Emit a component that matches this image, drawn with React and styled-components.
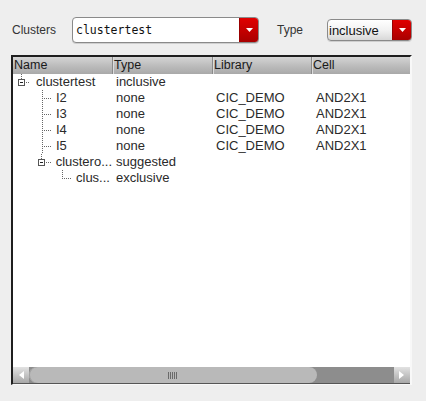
import React from "react";
import styled, { createGlobalStyle } from "styled-components";

const Global = createGlobalStyle`
  html, body { margin: 0; padding: 0; background: #eeeeee; }
  body { font-family: "Liberation Sans", Arial, sans-serif; color: #222; }
`;

const Page = styled.div`
  width: 426px;
  height: 401px;
  box-sizing: border-box;
  padding-top: 17px;
`;

const TopBar = styled.div`
  display: flex;
  align-items: center;
  height: 26px;
  padding-left: 12px;
`;

const Label = styled.span`
  font-size: 12px;
  color: #333;
  width: ${(p) => p.$w}px;
`;

const Combo = styled.div`
  display: flex;
  width: ${(p) => p.$w}px;
  height: ${(p) => p.$h}px;
  box-sizing: border-box;
  border: 1px solid #8a8a8a;
  border-radius: 4px;
  overflow: hidden;
  background: ${(p) => (p.$flat ? "#fff" : "linear-gradient(#ffffff, #f2f2f2 50%, #d8d8d8)")};
  box-shadow: 0 1px 0 #cfcfcf;
`;

const ComboText = styled.span`
  flex: 1;
  display: flex;
  align-items: center;
  padding-left: ${(p) => (p.$mono ? 3 : 1)}px;
  font-family: ${(p) => (p.$mono ? '"DejaVu Sans Mono", "Liberation Mono", monospace' : '"Liberation Sans", Arial, sans-serif')};
  font-size: ${(p) => (p.$mono ? 11.5 : 13)}px;
  color: #111;
`;

const RedButton = styled.span`
  width: 18px;
  display: flex;
  align-items: center;
  justify-content: center;
  background: linear-gradient(#e00000, #c00000 60%, #a80000);
  border-left: 1px solid #900;
`;

const Arrow = () => (
  <svg width="7" height="4" viewBox="0 0 7 4">
    <polygon points="0,0 7,0 3.5,4" fill="#fff" />
  </svg>
);

const Table = styled.div`
  margin: 12px 0 0 11px;
  width: 401px;
  height: 330px;
  box-sizing: border-box;
  border-top: 2px solid #1e1e1e;
  border-left: 2px solid #1e1e1e;
  border-right: 2px solid #f8f8f8;
  border-bottom: 1px solid #f8f8f8;
  background: #fff;
  display: flex;
  flex-direction: column;
`;

const Cols = "99px 100px 99px 97px";

const Header = styled.div`
  display: grid;
  grid-template-columns: ${Cols};
  height: 17px;
  background: linear-gradient(#d4d4d4, #bdbdbd 50%, #a9a9a9);
`;

const HeadCell = styled.div`
  font-size: 12.5px;
  line-height: 17px;
  padding-left: 1px;
  color: #1a1a1a;
  border-left: ${(p) => (p.$first ? "none" : "1px solid #8a8a8a")};
  box-shadow: ${(p) => (p.$first ? "none" : "inset 1px 0 0 #dcdcdc")};
  white-space: nowrap;
`;

const Body = styled.div`
  flex: 1;
`;

const Row = styled.div`
  display: grid;
  grid-template-columns: ${Cols};
  height: 16px;
  font-size: 13px;
  line-height: 16px;
  color: #2a2a2a;
`;

const NameCell = styled.div`
  display: flex;
  align-items: center;
  white-space: nowrap;
`;

const Cell = styled.div`
  padding-left: ${(p) => p.$pad}px;
  white-space: nowrap;
`;

const dot = { stroke: "#666", strokeWidth: 1, strokeDasharray: "1 1", shapeRendering: "crispEdges" };

const Expander = ({ x, y }) => (
  <g shapeRendering="crispEdges">
    <rect x={x + 0.5} y={y + 0.5} width="6" height="6" fill="#fff" stroke="#555" />
    <line x1={x + 2} y1={y + 3.5} x2={x + 5} y2={y + 3.5} stroke="#222" />
  </g>
);

const TreeLines = ({ kind }) => {
  if (kind === "root")
    return (
      <svg width="23" height="16">
        <line x1="8.5" y1="0" x2="8.5" y2="5" {...dot} />
        <Expander x={5} y={5} />
        <line x1="13" y1="8.5" x2="17" y2="8.5" {...dot} />
      </svg>
    );
  if (kind === "leaf1")
    return (
      <svg width="43" height="16">
        <line x1="29.5" y1="0" x2="29.5" y2="16" {...dot} />
        <line x1="31" y1="8.5" x2="39" y2="8.5" {...dot} />
      </svg>
    );
  if (kind === "node1")
    return (
      <svg width="43" height="16">
        <line x1="28.5" y1="0" x2="28.5" y2="5" {...dot} />
        <Expander x={25} y={5} />
        <line x1="33" y1="8.5" x2="38" y2="8.5" {...dot} />
      </svg>
    );
  return (
    <svg width="63" height="16">
      <line x1="49.5" y1="0" x2="49.5" y2="9" {...dot} />
      <line x1="51" y1="8.5" x2="59" y2="8.5" {...dot} />
    </svg>
  );
};

const Scrollbar = styled.div`
  display: flex;
  height: 16px;
  background: #8d8d8d;
  border-bottom: 1px solid #555;
`;

const ScrollButton = styled.div`
  width: 16px;
  display: flex;
  align-items: center;
  justify-content: center;
  background: linear-gradient(#e2e2e2, #c4c4c4 50%, #a8a8a8);
`;

const Thumb = styled.div`
  width: ${(p) => p.$w}px;
  display: flex;
  align-items: center;
  justify-content: flex-end;
  padding-right: 140px;
  box-sizing: border-box;
  background: #b9b9b9;
  border-radius: 8px;
  box-shadow: inset 1px 0 0 #a0a0a0;
`;

const Track = styled.div`
  flex: 1;
`;

const Grip = () => (
  <svg width="9" height="7" shapeRendering="crispEdges">
    {[0, 2, 4, 6, 8].map((x) => (
      <line key={x} x1={x + 0.5} y1="0" x2={x + 0.5} y2="7" stroke="#6a6a6a" />
    ))}
  </svg>
);

const rows = [
  { kind: "root", name: "clustertest", type: "inclusive" },
  { kind: "leaf1", name: "I2", type: "none", lib: "CIC_DEMO", cell: "AND2X1" },
  { kind: "leaf1", name: "I3", type: "none", lib: "CIC_DEMO", cell: "AND2X1" },
  { kind: "leaf1", name: "I4", type: "none", lib: "CIC_DEMO", cell: "AND2X1" },
  { kind: "leaf1", name: "I5", type: "none", lib: "CIC_DEMO", cell: "AND2X1" },
  { kind: "node1", name: "clustero...", type: "suggested" },
  { kind: "leaf2", name: "clus...", type: "exclusive" },
];

export default function App() {
  return (
    <Page>
      <Global />
      <TopBar>
        <Label $w={60}>Clusters</Label>
        <Combo $w={187} $h={26} $flat>
          <ComboText $mono>clustertest</ComboText>
          <RedButton>
            <Arrow />
          </RedButton>
        </Combo>
        <Label $w={50} style={{ marginLeft: 18 }}>Type</Label>
        <Combo $w={85} $h={22}>
          <ComboText>inclusive</ComboText>
          <RedButton>
            <Arrow />
          </RedButton>
        </Combo>
      </TopBar>
      <Table>
        <Header>
          <HeadCell $first>Name</HeadCell>
          <HeadCell>Type</HeadCell>
          <HeadCell>Library</HeadCell>
          <HeadCell>Cell</HeadCell>
        </Header>
        <Body>
          {rows.map((r, i) => (
            <Row key={i}>
              <NameCell>
                <TreeLines kind={r.kind} />
                {r.name}
              </NameCell>
              <Cell $pad={4}>{r.type}</Cell>
              <Cell $pad={4}>{r.lib || ""}</Cell>
              <Cell $pad={5}>{r.cell || ""}</Cell>
            </Row>
          ))}
        </Body>
        <Scrollbar>
          <ScrollButton>
            <svg width="6" height="8">
              <polygon points="6,0 6,8 1,4" fill="#fff" />
            </svg>
          </ScrollButton>
          <Thumb $w={288}>
            <Grip />
          </Thumb>
          <Track />
          <ScrollButton>
            <svg width="6" height="8">
              <polygon points="0,0 0,8 5,4" fill="#fff" />
            </svg>
          </ScrollButton>
        </Scrollbar>
      </Table>
    </Page>
  );
}
